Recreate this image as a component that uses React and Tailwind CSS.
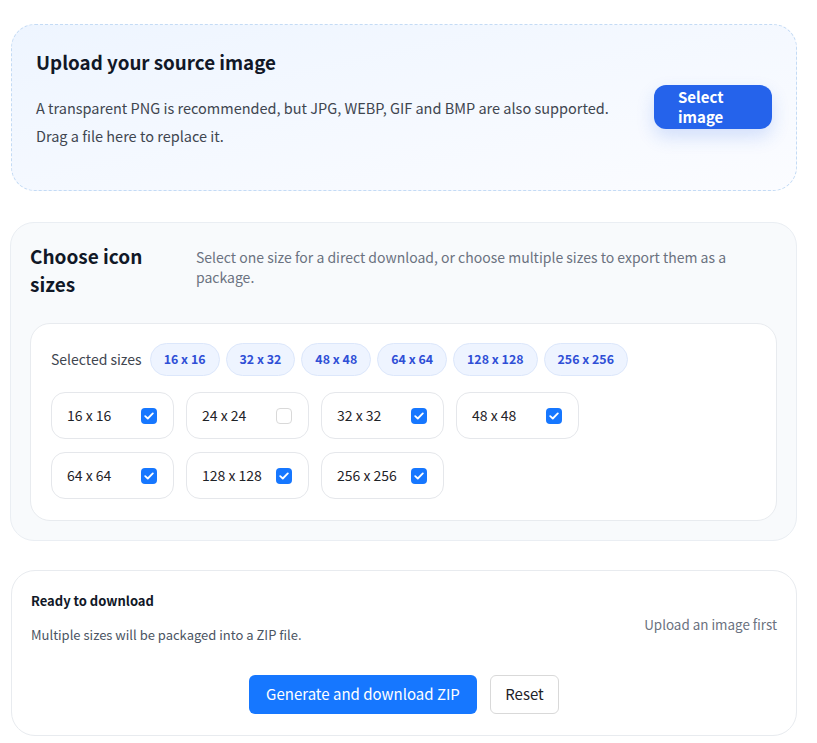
import React, { useState } from "react";

const SIZES = [16, 24, 32, 48, 64, 128, 256];

function Check({ on }) {
  if (!on) {
    return <span className="w-[16px] h-[16px] rounded-[4px] border border-[#d9d9d9] bg-white" />;
  }
  return (
    <span className="w-[16px] h-[16px] rounded-[4px] bg-[#1677ff] flex items-center justify-center">
      <svg width="10" height="8" viewBox="0 0 10 8" fill="none">
        <path d="M1.2 4.1 3.8 6.5 8.8 1.4" stroke="white" strokeWidth="1.8" strokeLinecap="round" strokeLinejoin="round" />
      </svg>
    </span>
  );
}

export default function App() {
  const [picked, setPicked] = useState([16, 32, 48, 64, 128, 256]);

  const toggle = (s) => {
    setPicked((p) => (p.includes(s) ? p.filter((x) => x !== s) : [...p, s].sort((a, b) => a - b)));
  };

  return (
    <div
      className="bg-white min-h-[743px] pl-[10px] pr-[20px] pt-[24px] pb-[8px] text-[#1f2328]"
      style={{ fontFamily: '"Noto Sans CJK SC", "Noto Sans", sans-serif' }}
    >
      {/* upload */}
      <div className="ml-[1px] rounded-[24px] border border-dashed border-[#c4dbf5] bg-gradient-to-br from-[#eef5ff] to-[#fbfcff] pl-[24px] pr-[24px] pt-[25px] pb-[40px] flex justify-between items-start">
        <div>
          <h2 className="text-[18.8px] leading-[24px] font-bold text-[#111827]">Upload your source image</h2>
          <p className="mt-[20px] text-[14.5px] leading-[28px] text-[#3f4650]">
            A transparent PNG is recommended, but JPG, WEBP, GIF and BMP are also supported.
          </p>
          <p className="text-[14.5px] leading-[28px] text-[#3f4650]">Drag a file here to replace it.</p>
        </div>
        <button className="mt-[35px] w-[118px] h-[44px] shrink-0 rounded-[12px] bg-[#2563eb] pl-[24px] pr-[30px] text-left text-[15px] leading-[20px] font-bold text-white shadow-[0_8px_18px_rgba(37,99,235,0.18)]">
          Select image
        </button>
      </div>

      {/* sizes */}
      <div className="mt-[31px] rounded-[24px] border border-[#eaeef3] bg-[#f8fafc] pl-[19px] pr-[19px] pt-[19px] pb-[19px]">
        <div className="flex">
          <h2 className="w-[145px] shrink-0 text-[19px] leading-[28px] font-bold text-[#111827]">Choose icon sizes</h2>
          <p className="ml-[21px] mt-[5px] text-[14px] leading-[20px] text-[#6b7280]">
            Select one size for a direct download, or choose multiple sizes to export them as a package.
          </p>
        </div>
        <div className="mt-[25px] rounded-[20px] border border-[#e8ebef] bg-white pl-[20px] pr-[20px] pt-[19px] pb-[21px]">
          <div className="flex items-center">
            <span className="text-[14px] text-[#3f4650] mr-[8px]">Selected sizes</span>
            <div className="flex gap-[6px]">
              {picked.map((s) => (
                <span
                  key={s}
                  className="h-[33px] px-[13px] flex items-center rounded-full border border-[#dce7fb] bg-[#eef4ff] text-[12.4px] font-bold text-[#2f4fd6]"
                >
                  {s} x {s}
                </span>
              ))}
            </div>
          </div>
          <div className="mt-[16px] grid grid-cols-[repeat(4,123px)] gap-x-[12px] gap-y-[13px]">
            {SIZES.map((s) => (
              <label
                key={s}
                onClick={() => toggle(s)}
                className="h-[47px] rounded-[14px] border border-[#e5e7eb] bg-white pl-[15px] pr-[16px] flex items-center justify-between cursor-pointer"
              >
                <span className="text-[14px] text-[#1f2328]">
                  {s} x {s}
                </span>
                <Check on={picked.includes(s)} />
              </label>
            ))}
          </div>
        </div>
      </div>

      {/* download */}
      <div className="mt-[29px] ml-[1px] rounded-[24px] border border-[#e8ebef] bg-white px-[19px] pt-[21px] pb-[21px]">
        <div className="flex justify-between">
          <div>
            <div className="text-[13px] leading-[18px] font-bold text-[#111827]">Ready to download</div>
            <div className="mt-[16px] text-[13px] leading-[18px] text-[#4b5563]">
              Multiple sizes will be packaged into a ZIP file.
            </div>
          </div>
          <div className="mt-[23px] text-[13.4px] leading-[18px] text-[#6b7280]">Upload an image first</div>
        </div>
        <div className="mt-[31px] flex justify-center gap-[13px]">
          <button className="h-[39px] w-[228px] rounded-[6px] bg-[#1677ff] text-[15px] text-white">
            Generate and download ZIP
          </button>
          <button className="h-[39px] w-[69px] rounded-[6px] border border-[#d9d9d9] bg-white text-[15px] text-[#1f2328]">
            Reset
          </button>
        </div>
      </div>
    </div>
  );
}
